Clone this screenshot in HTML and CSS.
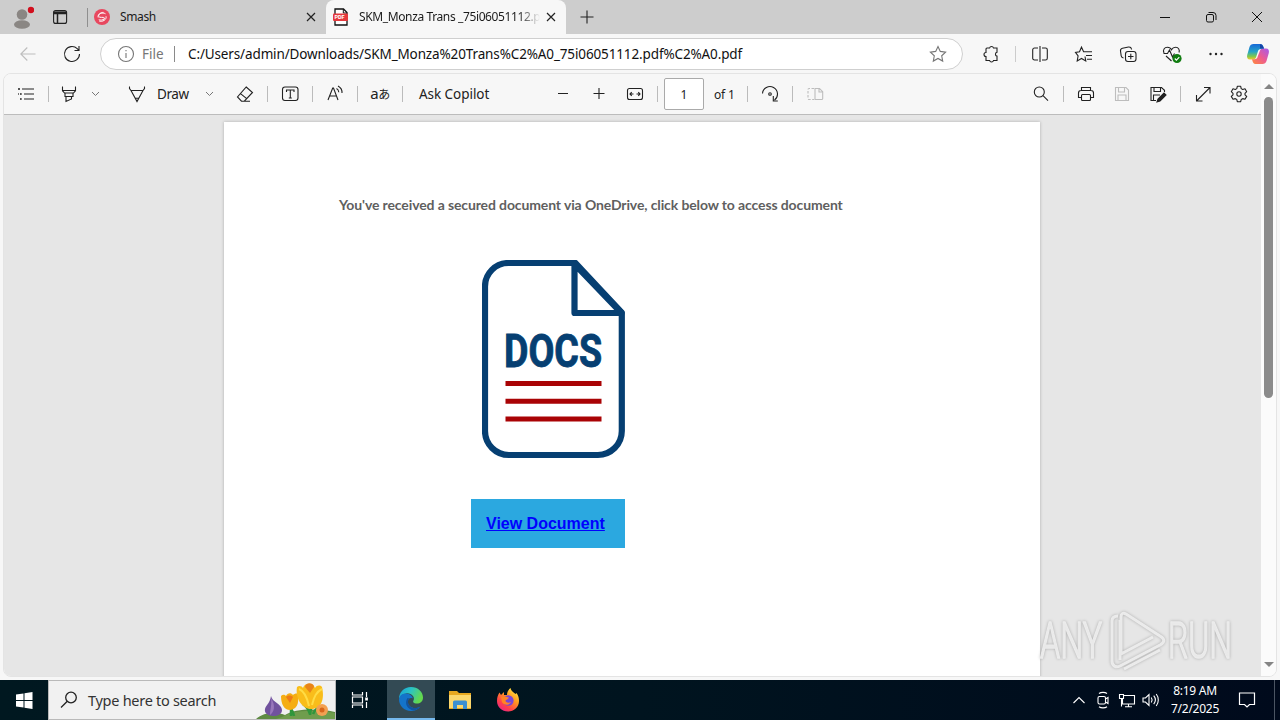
FILE: index.html
```html
<!DOCTYPE html>
<html lang="en">
<head>
    <meta charset="UTF-8">
    <meta name="viewport" content="width=device-width, initial-scale=1.0">
    <title>SKM_Monza Trans _75i06051112.pdf</title>
    <link rel="stylesheet" href="styles.css">
</head>
<body>
    <div class="browser">
        <div class="tab-strip">
            <div class="profile">
                <svg width="24" height="28" viewBox="0 0 24 28">
                    <circle cx="12" cy="11.5" r="5.3" fill="#8a8683"/>
                    <ellipse cx="12" cy="21.5" rx="8" ry="4.3" fill="#8a8683"/>
                    <circle cx="21" cy="7" r="3.2" fill="#d20f1e"/>
                </svg>
            </div>
            <div class="workspaces">
                <svg class="icon" viewBox="0 0 20 20">
                    <rect x="3.6" y="3.6" width="13" height="12.8" rx="2"/>
                    <path d="M3.6 5.3h13M3.6 6.600h13M7.500 7v9.400" stroke-width="1.5"/>
                </svg>
            </div>
            <div class="tab">
                <svg width="16" height="16" viewBox="0 0 16 16">
                    <circle cx="8" cy="8" r="8" fill="#e8485f"/>
                    <path d="M11.5 4.8C8.5 3 4 4.600 4.700 7.300c.5 2 5 .3 5.700 1.600.5 1.500-3.200 3-5.600 1.700M12 7.300c1 3.500-4 6-6.800 4.700M4.200 8.500C3.300 5.500 7 3.200 9.500 3.400" fill="none" stroke="#fff" stroke-width="1"/>
                </svg>
                <span class="tab-title">Smash</span>
                <svg class="close" viewBox="0 0 10 10"><path d="M1 1l8 8M9 1L1 9"/></svg>
            </div>
            <div class="tab active">
                <svg width="16" height="18" viewBox="0 0 16 18">
                    <path d="M2 1h8.500L14 4.500V17H2z" fill="#fff" stroke="#111" stroke-width="1.300"/>
                    <path d="M10.300 1v4H14" fill="none" stroke="#111"/>
                    <rect x="0" y="5.500" width="15" height="7.500" rx="1" fill="#e5393d"/>
                    <text x="1.500" y="11.300" class="pdf-label">PDF</text>
                </svg>
                <span class="tab-title fade">SKM_Monza Trans _75i06051112.p</span>
                <svg class="close" viewBox="0 0 10 10"><path d="M1 1l8 8M9 1L1 9"/></svg>
            </div>
            <div class="new-tab">
                <svg class="icon" viewBox="0 0 20 20"><path d="M10 3.500v13M3.500 10h13"/></svg>
            </div>
            <div class="window-controls">
                <svg viewBox="0 0 46 34"><path d="M18 17.500h10"/></svg>
                <svg viewBox="0 0 46 34">
                    <rect x="18.500" y="14.500" width="7" height="7.500" rx="1.500"/>
                    <path d="M20.500 12.500h4.500a3 3 0 0 1 3 3V20"/>
                </svg>
                <svg viewBox="0 0 46 34"><path d="M18 12l10 10M28 12L18 22"/></svg>
            </div>
        </div>

        <div class="nav-bar">
            <div class="nav-btn disabled">
                <svg class="icon" viewBox="0 0 20 20"><path d="M17.500 10H2.800M9.300 3.500L2.800 10l6.500 6.500"/></svg>
            </div>
            <div class="nav-btn">
                <svg class="icon" viewBox="0 0 20 20"><path d="M17.500 10a7.500 7.500 0 1 1-2.300-5.400L17 6.400M17 2v4.500h-4.500"/></svg>
            </div>
            <div class="omnibox">
                <svg class="icon info" viewBox="0 0 20 20">
                    <circle cx="10" cy="10" r="7.500"/>
                    <path d="M10 9v5M10 6v1.300"/>
                </svg>
                <span class="scheme">File</span>
                <span class="url">C:/Users/admin/Downloads/SKM_Monza%20Trans%C2%A0_75i06051112.pdf%C2%A0.pdf</span>
                <svg class="icon star" viewBox="0 0 20 20"><path d="M10 2.500l2.300 4.900 5.300.7-3.900 3.700 1 5.300L10 14.500l-4.700 2.600 1-5.300-3.900-3.700 5.300-.7z"/></svg>
            </div>
            <div class="nav-btn first">
                <svg class="icon" viewBox="0 0 20 20"><path d="M6 4h2.600a2 2 0 0 1 3.900 0H16v4.200a2 2 0 0 0 0 3.900V16.500h-3.500a2 2 0 0 1-3.900 0H5v-4a2 2 0 0 1 0-4V5a1 1 0 0 1 1-1z"/></svg>
            </div>
            <span class="nav-divider"></span>
            <div class="nav-btn">
                <svg class="icon" viewBox="0 0 20 20">
                    <path d="M8 4H4.500A1.800 1.800 0 0 0 2.700 5.800v8.400A1.800 1.800 0 0 0 4.500 16H8M12 4h3.500a1.800 1.800 0 0 1 1.800 1.800v8.400a1.800 1.800 0 0 1-1.800 1.800H12M10 2v16"/>
                </svg>
            </div>
            <div class="nav-btn">
                <svg class="icon" viewBox="0 0 20 20"><path d="M11 12.500l.8 4.400-4.300-2.400-4.300 2.400.9-5L1.500 8.400l4-.6L7.500 3.200l2.100 4.600H18M12 11.500h6M13 15.200h5"/></svg>
            </div>
            <div class="nav-btn">
                <svg class="icon" viewBox="0 0 20 20">
                    <rect x="7.500" y="7.500" width="10.500" height="10" rx="2.500"/>
                    <path d="M12.800 9.800v5.500M10 12.500h5.500M5.500 14C4 13.700 3.500 13 3.200 11.800L2.500 7C2.300 5.500 3 4.500 4.500 4.200l6-1.200c1.700-.2 2.700.5 3 2v.5"/>
                </svg>
            </div>
            <div class="nav-btn">
                <svg class="icon" viewBox="0 0 20 20">
                    <path d="M2 9C.500 6 2.500 3.300 5.300 3.300c2 0 3.500 1 4.200 2.500.8-1.500 2.300-2.500 4.200-2.500C16.500 3.300 18 6 17 8.500M4 12l5.500 5M1.500 9.500h4L7.500 6l3 7 2-3.500"/>
                    <circle cx="15" cy="14.500" r="4.600" fill="#107c10" stroke="none"/>
                    <path d="M12.800 14.500l1.600 1.600 2.900-3" stroke="#fff"/>
                </svg>
            </div>
            <div class="nav-btn">
                <svg class="icon" viewBox="0 0 20 20">
                    <g fill="#222" stroke="none"><circle cx="4.500" cy="10" r="1.200"/><circle cx="10" cy="10" r="1.200"/><circle cx="15.500" cy="10" r="1.200"/></g>
                </svg>
            </div>
            <div class="copilot">
                <svg width="24" height="24" viewBox="0 0 24 24">
                    <defs>
                        <linearGradient id="cpBlue" x1="0" y1="0" x2="0" y2="1">
                            <stop offset="0" stop-color="#1768d8"/>
                            <stop offset=".5" stop-color="#25a5c6"/>
                            <stop offset=".8" stop-color="#80c94d"/>
                            <stop offset="1" stop-color="#f4c62e"/>
                        </linearGradient>
                        <linearGradient id="cpPink" x1="1" y1="0" x2="0" y2="1">
                            <stop offset="0" stop-color="#a45aee"/>
                            <stop offset=".5" stop-color="#ed5b91"/>
                            <stop offset="1" stop-color="#ff8a3c"/>
                        </linearGradient>
                    </defs>
                    <path d="M7.500 2h7c2 0 2.500 1.500 3 3l.5 2h-3c-2 0-2.700 1-3.200 2.700L10 15.500c-.5 1.300-1.400 2-3 2H4c-2.500 0-3.400-2-2.800-4.500L3.500 5C4.100 3 5.500 2 7.500 2z" fill="url(#cpBlue)"/>
                    <path d="M16.500 22h-7c-2 0-2.500-1.500-3-3L6 17.300h2.500c2 0 2.700-1 3.200-2.700L14 8.500c.5-1.300 1.400-2 3-2h3c2.500 0 3.400 2 2.800 4.500L20.500 19c-.6 2-2 3-4 3z" fill="url(#cpPink)"/>
                    <path d="M14 2.200c2 0 3 1.500 3.500 3l.5 1.400h-4z" fill="#1645a5"/>
                </svg>
            </div>
        </div>

        <div class="viewer">
            <div class="viewer-main">
                <div class="toolbar">
                    <div class="tool">
                        <svg class="icon" viewBox="0 0 20 20"><path d="M6 5h12M8 10h10M8 15h10"/><path d="M2 5h2M4 10h1.700M4 15h1.700M2 10h.800" stroke-width="1.600"/></svg>
                    </div>
                    <span class="divider"></span>
                    <div class="tool highlighter">
                        <svg class="icon" viewBox="0 0 20 20"><path d="M3.500 2.500v4.200L5.500 9h9l2-2.300V2.500M3.500 6.500h13M6 9v3.500h8V9M7 12.500v5l5.500-2.500v-2.500"/></svg>
                    </div>
                    <div class="caret"><svg width="9" height="6" viewBox="0 0 9 6"><path d="M1 1l3.500 3.500L8 1"/></svg></div>
                    <div class="tool pen">
                        <svg class="icon" viewBox="0 0 20 20"><path d="M2.500 2.500v2L4 6.500h12l1.500-2v-2M4 6.500L10 17.500l6-11M8.200 14.300h3.600"/></svg>
                    </div>
                    <span class="draw-label">Draw</span>
                    <div class="caret"><svg width="9" height="6" viewBox="0 0 9 6"><path d="M1 1l3.500 3.500L8 1"/></svg></div>
                    <div class="tool eraser">
                        <svg class="icon" viewBox="0 0 20 20"><path d="M11.200 3l6.300 5.500-8.200 8.700H6.500L2.500 13zM5.500 9.600l6.500 5.300M9 17.200h6"/></svg>
                    </div>
                    <span class="divider"></span>
                    <div class="tool">
                        <svg class="icon" viewBox="0 0 20 20"><rect x="2.500" y="3" width="15.500" height="13.500" rx="2.500"/><path d="M6.500 8V6h7.500v2M10.300 6v8M8.800 14h3"/></svg>
                    </div>
                    <span class="divider"></span>
                    <div class="tool">
                        <svg class="icon" viewBox="0 0 20 20"><path d="M3 16L7.700 4h.8L13 16M4.500 12h7M11.500 4.500c1.500.8 2.200 2 2.300 3.700M13 2c2.800 1.500 4.200 4 4 7"/></svg>
                    </div>
                    <span class="divider"></span>
                    <div class="tool translate"><span>a</span>あ</div>
                    <span class="divider"></span>
                    <span class="ask">Ask Copilot</span>
                    <div class="tool">
                        <svg class="icon" viewBox="0 0 20 20"><path d="M5 9.500h10"/></svg>
                    </div>
                    <div class="tool zoom-in">
                        <svg class="icon" viewBox="0 0 20 20"><path d="M4.500 9.500h11M10 4v11"/></svg>
                    </div>
                    <div class="tool fit">
                        <svg class="icon" viewBox="0 0 20 20"><rect x="2.500" y="4.500" width="15" height="11" rx="2"/><path d="M5 10h3.500M15 10h-3.500M6.700 8.200L5 10l1.700 1.800M13.300 8.200L15 10l-1.700 1.800"/></svg>
                    </div>
                    <span class="divider"></span>
                    <div class="page-input">1</div>
                    <span class="page-total">of 1</span>
                    <span class="divider"></span>
                    <div class="tool">
                        <svg class="icon" viewBox="0 0 20 20"><path d="M2.500 9.500a7.500 7.500 0 1 1 12 6.500M13.300 12v5h4.500"/><circle cx="10" cy="10" r="1.300"/></svg>
                    </div>
                    <span class="divider"></span>
                    <div class="tool disabled">
                        <svg class="icon" viewBox="0 0 20 20"><path d="M10 4.500h4.500l3.200 3.200v6.800a1 1 0 0 1-1 1H10zM14 4.500V8h3.700"/><path d="M9 4.500H4a1 1 0 0 0-1 1v9a1 1 0 0 0 1 1h5" stroke-dasharray="2.500 1.500"/></svg>
                    </div>
                    <div class="tool search">
                        <svg class="icon" viewBox="0 0 20 20"><circle cx="8.300" cy="8" r="5"/><path d="M12 11.700l5 5"/></svg>
                    </div>
                    <span class="divider"></span>
                    <div class="tool">
                        <svg class="icon" viewBox="0 0 20 20"><path d="M5.500 6.500V3.500h9v3M5 13.500H2.500V9a2.500 2.500 0 0 1 2.500-2.500h10A2.500 2.500 0 0 1 17.500 9v4.500H15"/><rect x="5.500" y="10.500" width="9" height="6" rx="1"/></svg>
                    </div>
                    <div class="tool disabled">
                        <svg class="icon" viewBox="0 0 20 20"><path d="M3.500 3.500H14L16.500 6v10.500h-13zM6.500 3.500V8h6V3.500M6 16.500v-5.500h8v5.500"/></svg>
                    </div>
                    <div class="tool">
                        <svg class="icon" viewBox="0 0 20 20"><path d="M8 16.500H3V3.500h10.500L16.500 6.300V8M6 3.500V7.500h6.500V3.500M5.500 16.500V11H12"/><path d="M9 18l1-3 6-6 2 2-6 6z" fill="#222"/></svg>
                    </div>
                    <span class="divider"></span>
                    <div class="tool">
                        <svg class="icon" viewBox="0 0 20 20"><path d="M4 16.500L16.500 4M11 3.500h6V9.500M3.500 11v6H9.500"/></svg>
                    </div>
                    <div class="tool">
                        <svg class="icon" viewBox="0 0 20 20"><path d="M8.300 2.300h3.400l.5 2.300 1.500.9 2.300-.7 1.700 2.900-1.700 1.600v1.500l1.700 1.600-1.700 2.900-2.300-.7-1.500.9-.5 2.200H8.300l-.5-2.200-1.500-.9-2.300.7-1.700-2.900L4 10.800V9.300L2.300 7.700 4 4.800l2.300.7 1.500-.9z" stroke-linejoin="round"/><circle cx="10" cy="10" r="2.200"/></svg>
                    </div>
                </div>

                <div class="canvas">
                    <div class="page">
                        <h1>You've received a secured document via OneDrive, click below to access document</h1>
                        <svg class="docs-icon" width="144" height="199" viewBox="0.5 0 144 199">
                            <path d="M94 3H27A23.500 23.500 0 0 0 3.500 26.500V171A24 24 0 0 0 27.500 195H116A24 24 0 0 0 140.300 171V52.500z" fill="none" stroke="#063f72" stroke-width="6.200" stroke-linejoin="round"/>
                            <path d="M93 4v49H140z" fill="#fff" stroke="#063f72" stroke-width="6.200" stroke-linejoin="round"/>
                            <text x="22.500" y="107" textLength="98" lengthAdjust="spacingAndGlyphs">DOCS</text>
                            <path d="M24 123.500h96M24 141.200h96M24 159h96" stroke="#a90305" stroke-width="5"/>
                        </svg>
                        <a class="view-btn" href="#">View Document</a>
                    </div>
                </div>
            </div>
            <div class="scrollbar">
                <span class="arrow up"></span>
                <span class="thumb"></span>
                <span class="arrow down"></span>
            </div>
        </div>
    </div>

    <svg class="watermark" width="208" height="66" viewBox="0 0 208 66">
        <g class="mark">
            <text x="2" y="50" textLength="62" lengthAdjust="spacingAndGlyphs">ANY</text>
            <text x="130" y="50" textLength="64" lengthAdjust="spacingAndGlyphs">RUN</text>
            <path d="M80 8c-4 0-6 2-6 5v40c0 5 4 7 8 5l40-21c5-3 5-6 0-9L88 6c-3-2-5 0-5 3v37l32-17M82 52v-40M86 61l36-19"/>
        </g>
    </svg>

    <div class="taskbar">
        <div class="start">
            <svg width="17" height="17" viewBox="0 0 17 17"><path d="M0 2.500L7.500 1.500V8H0zM8.500 1.300L16.500 0v8h-8zM0 9h7.500v6.500L0 14.500zM8.500 9h8v8l-8-1.300z" fill="#fff"/></svg>
        </div>
        <div class="search-box">
            <svg width="18" height="18" viewBox="0 0 18 18"><circle cx="11" cy="6.500" r="5.300"/><path d="M7.300 10.300L1 16.500"/></svg>
            <span>Type here to search</span>
            <svg class="flowers" width="79" height="38" viewBox="0 0 79 38">
                <path d="M0 38C8 31 20 31 29 34c10-6 30-7 50-3v7z" fill="#5e8a42"/>
                <path d="M26 36c12-7 30-7 53-4v6H20z" fill="#6f9d4d"/>
                <path d="M35 35V24M38 35c-1-6-3-8-6-10M54 34c0-5 1-8 3-12M54 33c-2-6-4-8-7-10M57 33c2-5 4-6 7-8" stroke="#2f963c" stroke-width="2.500" fill="none"/>
                <path d="M15 15c1 6 11 8 11 14 0 4-4 6-9 6s-9-3-8-7c1-4 5-6 6-13z" fill="#71529e"/>
                <path d="M15 17c1 7-1 12-1 17 4-3 6-9 1-17z" fill="#9877bb"/>
                <path d="M25 15c2-2 4-1 5 0 1-3 5-4 7-1 2-2 5-2 5 0 1 9-1 14-8 15-6 0-9-6-9-14z" fill="#f5ad13"/>
                <path d="M30 16c2-2 5-2 7 0l-3 6z" fill="#ed7b16"/>
                <path d="M41 6c2-2 5-1 6 1 1-5 10-6 12 0 2-3 5-3 7-1 3 13-1 22-11 22C46 28 39 17 41 6z" fill="#f9bd1a"/>
                <path d="M49 6c0-5 9-5 9 0l-4 6z" fill="#e98418"/>
                <path d="M43 8c5 2 8 8 10 17M66 8c-6 3-8 8-10 16" fill="none" stroke="#ffdc45" stroke-width="2"/>
                <circle cx="66" cy="29" r="6" fill="#f3a052"/><circle cx="66" cy="29" r="2.500" fill="#d9661b"/>
            </svg>
        </div>
        <div class="task">
            <svg width="18" height="18" viewBox="0 0 18 18"><path d="M1.500 1v3h10V1M1.500 17v-3h10v3M1.500 6h10v6h-10zM15.500 1v5M15.500 11v6" fill="none" stroke="#fff" stroke-width="1.200"/><rect x="14.200" y="6.500" width="2.700" height="3" fill="#fff"/></svg>
        </div>
        <div class="task running">
            <svg width="24" height="24" viewBox="0 0 24 24">
                <defs>
                    <linearGradient id="edgeTop" x1="0" y1="0" x2="1" y2=".4">
                        <stop offset="0" stop-color="#159fd9"/>
                        <stop offset=".5" stop-color="#2bc3c4"/>
                        <stop offset="1" stop-color="#63d94e"/>
                    </linearGradient>
                </defs>
                <path d="M0 12C0 5 5 0 12 0s12 5 12 10.500c0 4-3 6-6 6-3.500 0-4.500-1.500-3.500-3C16.500 10 12 5.500 7 6.500 3 7.300 1 9.500 0 12z" fill="url(#edgeTop)"/>
                <path d="M0 12.500C.500 8 4 6 7.500 6.500c3.500.3 6 2.500 6.500 5-3-1.500-5.500 1-5 4 .5 4.500 6 7.500 12.500 4C19 22.800 15.500 24 12 24 5 24 0 18.500 0 12.500z" fill="#1474ca"/>
                <path d="M8.500 11C5 16 8 22.500 15 23.500c3-.7 5-2 6.500-4-6.500 3.500-12 .5-12.500-4-.2-1.500.3-3 1.500-4z" fill="#12539f"/>
            </svg>
        </div>
        <div class="task">
            <svg width="22" height="18" viewBox="0 0 22 18">
                <path d="M0 0h8l2 2h12v16H0z" fill="#e7a81f"/>
                <path d="M0 4h22v13H0z" fill="#fbd76c"/>
                <path d="M4 18v-7a1.500 1.500 0 0 1 1.500-1.500h11A1.500 1.500 0 0 1 18 11v7h-4v-4H8v4z" fill="#3b8fd0"/>
            </svg>
        </div>
        <div class="task">
            <svg width="24" height="24" viewBox="0 0 24 24">
                <defs>
                    <linearGradient id="fox" x1=".9" y1="0" x2=".2" y2="1">
                        <stop offset="0" stop-color="#fff34a"/>
                        <stop offset=".4" stop-color="#ff9a1f"/>
                        <stop offset=".75" stop-color="#ff3f4b"/>
                        <stop offset="1" stop-color="#e7228a"/>
                    </linearGradient>
                </defs>
                <path d="M1 13C1 9 2 7 3.500 4.500L5 7l3-3v3h3c0-3 1-5 3.500-7 .5 3 3 4 5 6L20.500 5c2 3 2.500 5 2.500 8 0 6-5 10.500-11 10.500S1 19 1 13z" fill="url(#fox)"/>
                <circle cx="12.300" cy="12.500" r="5.300" fill="#7846d6"/>
                <path d="M5 9c3-2 5 0 8 .5-1 2-3 2-3.500 3 0 2 3 3 5.500 1.500-1 3-7 4-9 0z" fill="#ff8424"/>
            </svg>
        </div>
        <div class="tray">
            <svg viewBox="0 0 24 24"><path d="M6.500 15l5.500-5.500 5.500 5.500"/></svg>
            <svg viewBox="0 0 24 24"><rect x="7" y="8.500" width="7.500" height="7.500" rx="1.500"/><path d="M14.500 11l2.500-1.500v6L14.500 14M8 5.500c2-1.500 6-1.500 8 0M8 18.700c2 1.500 6 1.500 8 0"/></svg>
            <svg viewBox="0 0 24 24"><path d="M9 7.500h10.500v8.500H7.500V11M13.500 16v2.500M10 18.700h7M4.500 6.500h4v4h-4zM6.500 10.500v8"/></svg>
            <svg viewBox="0 0 24 24"><path d="M4 10h2.500L10 6.500v11L6.500 14H4zM12.300 9.500c1 1.500 1 3.500 0 5M14.700 7.700c2 2.500 2 6 0 8.500M17.200 6c2.800 3.500 2.800 8.500 0 12"/></svg>
        </div>
        <div class="clock">
            <span>8:19 AM</span>
            <span>7/2/2025</span>
        </div>
        <div class="notifications">
            <svg width="18" height="18" viewBox="0 0 18 18"><path d="M1.500 2h15v11.500h-5L9 16l-2.500-2.500h-5z"/></svg>
        </div>
    </div>
</body>
</html>
```
FILE: styles.css
```css
:root {
    --strip: #cdcdcd;
    --chrome: #f7f7f7;
    --ink: #222;
    --muted: #767676;
    --navy: #063f72;
}

* {
    margin: 0;
    padding: 0;
    box-sizing: border-box;
}

body {
    width: 1280px;
    height: 720px;
    overflow: hidden;
    background: var(--chrome);
    color: var(--ink);
    font-family: 'Noto Sans', 'Open Sans', sans-serif;
}

svg {
    display: block;
    flex: none;
}

.icon {
    width: 20px;
    height: 20px;
    fill: none;
    stroke: var(--ink);
    stroke-width: 1.1;
}

.browser {
    height: 680px;
    display: flex;
    flex-direction: column;
}

/* tabs */
.tab-strip {
    height: 34px;
    display: flex;
    align-items: center;
    background: var(--strip);
}

.profile {
    width: 44px;
    padding-left: 10px;
}

.workspaces {
    width: 43px;
    padding-left: 6px;
}

.tab {
    width: 239px;
    height: 34px;
    display: flex;
    align-items: center;
    padding: 0 10px 0 7px;
    background: linear-gradient(#8f8f8f, #8f8f8f) no-repeat 0 8px / 1px 19px;
    font-size: 12px;
    letter-spacing: -0.38px;
}

.tab.active {
    width: 240px;
    padding: 0 10px 0 7px;
    background: var(--chrome);
    border-radius: 8px 8px 0 0;
}

.tab-title {
    flex: 1;
    margin: 0 6px 0 10px;
    white-space: nowrap;
    overflow: hidden;
    line-height: 18px;
    color: #1b1b1b;
}

.tab-title.fade {
    -webkit-mask-image: linear-gradient(to right, #000 88%, transparent);
    mask-image: linear-gradient(to right, #000 88%, transparent);
}

.pdf-label {
    font: bold 5.5px 'Roboto', sans-serif;
    letter-spacing: 0;
    fill: #fff;
}

.close {
    width: 10px;
    height: 10px;
    stroke: var(--ink);
    stroke-width: 1.2;
}

.new-tab {
    width: 42px;
    padding-left: 11px;
}

.window-controls {
    margin-left: auto;
    display: flex;
}

.window-controls svg {
    width: 46px;
    height: 34px;
    fill: none;
    stroke: #111;
}

/* address row */
.nav-bar {
    height: 39px;
    display: flex;
    align-items: center;
    padding-left: 6px;
}

.nav-btn {
    width: 44px;
    display: flex;
    justify-content: center;
}

.nav-btn.first {
    margin-left: 6px;
}

.disabled .icon {
    stroke: #bdbdbd;
}

.omnibox {
    flex: none;
    width: 863px;
    height: 32px;
    margin-left: 6px;
    display: flex;
    align-items: center;
    padding: 0 14px 0 15px;
    background: #fff;
    border: 1px solid #cfcfcf;
    border-radius: 16px;
    font-size: 13.5px;
}

.info,
.star {
    stroke: var(--muted);
}

.scheme {
    width: 33px;
    margin-left: 6px;
    color: var(--muted);
    border-right: 1px solid #8a8a8a;
    line-height: 16px;
}

.url {
    flex: 1;
    margin-left: 13px;
    color: #111;
    letter-spacing: -0.13px;
    white-space: nowrap;
}

.nav-divider {
    width: 1px;
    height: 16px;
    margin: 0 2px;
    background: #ccc;
}

.copilot {
    width: 40px;
    display: flex;
    justify-content: center;
}

/* pdf viewer */
.viewer {
    width: 1274px;
    height: 604px;
    margin-left: 3px;
    display: flex;
    background: #fafafa;
    border: 1px solid #e4e4e4;
    border-radius: 8px;
    overflow: hidden;
}

.viewer-main {
    width: 1257px;
}

.toolbar {
    height: 41px;
    display: flex;
    align-items: center;
    padding: 0 4px;
    background: var(--chrome);
    border-bottom: 1px solid #bcbcbc;
    font-size: 13.5px;
    letter-spacing: -0.05px;
}

.tool {
    width: 36px;
    display: flex;
    justify-content: center;
}

.highlighter {
    width: 32px;
}

.pen {
    margin-left: 14px;
}

.eraser {
    margin-left: 8px;
}

.zoom-in {
    width: 35px;
}

.fit {
    margin-left: 1px;
}

.search {
    margin-left: auto;
}

.caret {
    width: 20px;
    display: flex;
    justify-content: center;
    fill: none;
    stroke: #777;
}

.divider {
    width: 1px;
    height: 16px;
    margin: 0 4px;
    background: #bbb;
}

.draw-label {
    width: 42px;
    margin-left: 2px;
    padding-bottom: 1px;
    letter-spacing: -0.4px;
}

.translate {
    align-items: baseline;
    padding-bottom: 1px;
    font-family: 'Noto Sans', 'Noto Sans CJK JP', sans-serif;
    font-size: 12px;
    line-height: 20px;
    letter-spacing: -0.5px;
}

.translate span {
    font-size: 15px;
}

.ask {
    width: 138px;
    padding: 0 0 1px 12px;
}

.page-input {
    width: 40px;
    height: 32px;
    margin-left: 2px;
    background: #fff;
    border: 1px solid #aaa;
    border-radius: 2px;
    font-size: 12px;
    line-height: 31px;
    text-align: center;
}

.page-total {
    width: 39px;
    padding-left: 10px;
    font-size: 12px;
    letter-spacing: -0.2px;
}

.canvas {
    height: 562px;
    padding: 7px 0 0 220px;
    background: #e6e6e6;
    overflow: hidden;
}

.page {
    width: 816px;
    height: 1056px;
    padding: 73px 0 0 115px;
    background: #fff;
    box-shadow: 0 0 3px rgba(0, 0, 0, 0.25);
}

.page h1 {
    font: bold 14px/20px 'Lato', sans-serif;
    letter-spacing: -0.12px;
    color: #5f5f5f;
    white-space: nowrap;
}

.docs-icon {
    margin: 45px 0 0 143px;
}

.docs-icon text {
    font: bold 46px 'Roboto', sans-serif;
    fill: var(--navy);
    stroke: var(--navy);
    stroke-width: 0.9;
}

.view-btn {
    display: block;
    width: 154px;
    height: 49px;
    margin: 40px 0 0 132px;
    padding-left: 15px;
    background: #2ba8e0;
    color: #00f;
    font: bold 16px/49px 'Liberation Sans', sans-serif;
}

.scrollbar {
    width: 15px;
    display: flex;
    flex-direction: column;
    align-items: center;
    padding: 10px 0 9px;
    background: #fbfbfb;
}

.arrow {
    border: 5px solid transparent;
}

.arrow.up {
    border-top: 0;
    border-bottom-color: #858585;
}

.arrow.down {
    margin-top: auto;
    border-bottom: 0;
    border-top-color: #858585;
}

.thumb {
    width: 9px;
    height: 301px;
    margin-top: 8px;
    background: #8b8b8b;
    border-radius: 5px;
}

/* overlay logo */
.watermark {
    position: absolute;
    left: 1038px;
    top: 608px;
    filter: drop-shadow(0 0 1.5px rgba(0, 0, 0, 0.3));
}

.mark {
    fill: none;
    stroke: #f3f3f3;
    stroke-width: 3;
    stroke-linejoin: round;
    opacity: 0.85;
}

.mark text {
    font: 300 50px 'Roboto', sans-serif;
    fill: #f3f3f3;
    stroke-width: 1.6;
}

/* taskbar */
.taskbar {
    height: 40px;
    display: flex;
    background: linear-gradient(to right, #001820, #00141f 50%, #000a1c);
    color: #fff;
}

.start,
.task {
    width: 48px;
    display: flex;
    align-items: center;
    justify-content: center;
}

.search-box {
    width: 288px;
    display: flex;
    align-items: center;
    padding-left: 11px;
    background: #f1f1f1;
    border: 1px solid #b9b9b9;
    color: #333;
    font-size: 14.5px;
    letter-spacing: -0.28px;
}

.search-box > svg:first-child {
    fill: none;
    stroke: #222;
    stroke-width: 1.3;
}

.search-box span {
    margin-left: 10px;
    white-space: nowrap;
}

.flowers {
    margin-left: auto;
}

.running {
    margin: 0 1px 0 3px;
    background: #334a54;
    border-bottom: 2px solid #76b9ed;
}

.tray {
    margin-left: auto;
    display: flex;
    align-items: center;
}

.tray svg {
    width: 24px;
    height: 24px;
    fill: none;
    stroke: #fff;
    stroke-width: 1.1;
}

.clock {
    width: 64px;
    display: flex;
    flex-direction: column;
    align-items: center;
    padding-top: 2px;
    font-size: 12px;
    line-height: 18px;
    letter-spacing: -0.25px;
}

.notifications {
    width: 48px;
    margin-right: 5px;
    padding-right: 7px;
    display: flex;
    align-items: center;
    justify-content: center;
    border-right: 1px solid #4b5563;
    fill: none;
    stroke: #fff;
    stroke-width: 1.2;
}
```
